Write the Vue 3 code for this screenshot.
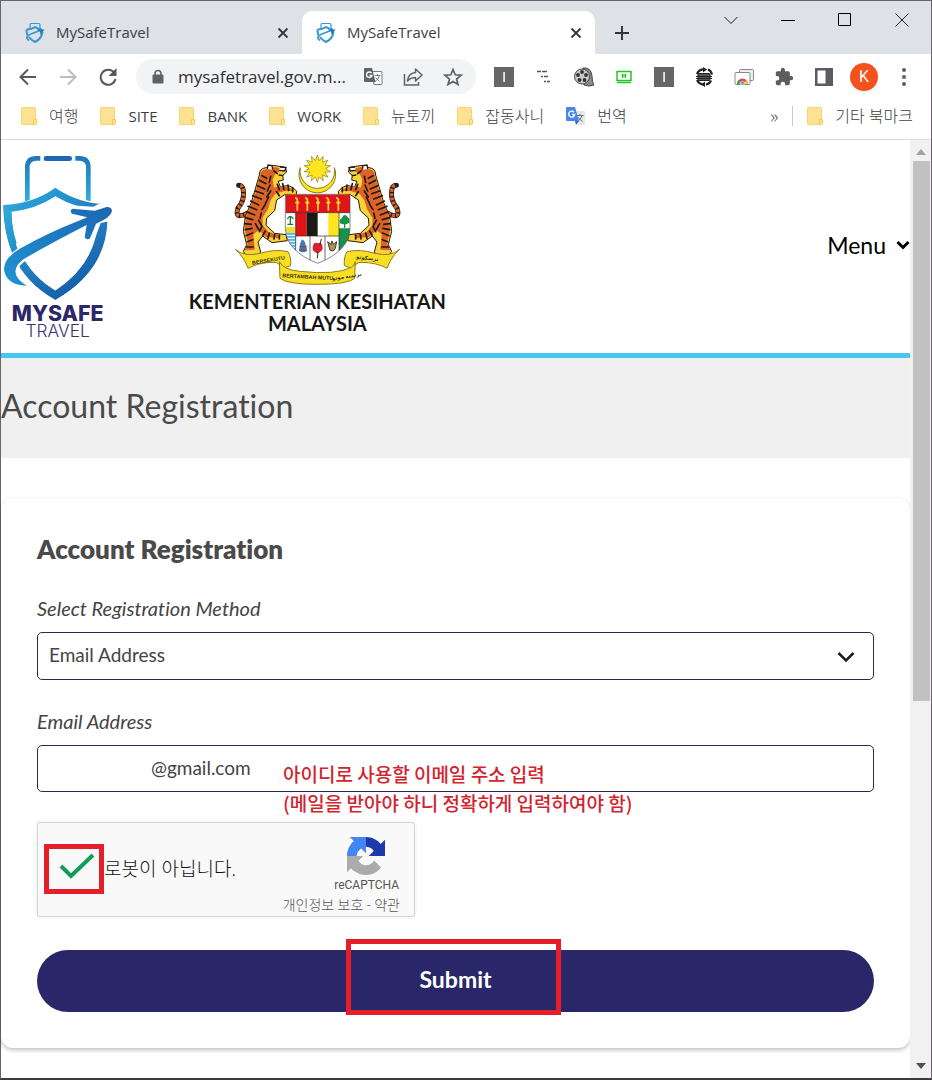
<script setup>
import { ref } from 'vue'

const tabs = ref([
  { id: 1, title: 'MySafeTravel', active: false },
  { id: 2, title: 'MySafeTravel', active: true },
])

const bookmarks = ['여행', 'SITE', 'BANK', 'WORK', '뉴토끼', '잡동사니']
const isLatin = (name) => /^[A-Z]/.test(name)

const method = ref('email')
const email = ref('@gmail.com')
const human = ref(true)

// sun of the crest, 14 rays
const rays = Array.from({ length: 28 }, (_, i) => {
  const r = i % 2 ? 25 : 41
  const a = (Math.PI * i) / 14 - Math.PI / 2
  return `${(412 + r * Math.cos(a)).toFixed(1)},${(71 + r * Math.sin(a)).toFixed(1)}`
}).join(' ')
</script>

<template>
  <div class="window">
    <div class="tabstrip">
      <div v-for="tab in tabs" :key="tab.id" class="tab" :class="{ active: tab.active }">
        <svg class="favicon" viewBox="0 0 20 20" width="20" height="20" fill="none" stroke="#3b97cf">
          <path d="M5 7V2q0-1.500 1.500-1.500h7Q15 .5 15 2v4" stroke-width="1.200" />
          <path d="M1.500 6.500q5 0 8.500-2.500 3 2 7 2.500M1.500 6.500q0 3 1 6M17.500 9q-1 7-7.500 10-4-2-6-5" stroke-width="2" />
          <path d="M4 17.500Q-1 14 6 11l10-4" stroke-width="1.800" />
          <path d="M11.500 6.500l8 0-4 5.500-.5-3.500z" fill="#2079bb" stroke="none" />
        </svg>
        <span class="tab-title">{{ tab.title }}</span>
        <button class="plain tab-close" aria-label="Close tab">
          <svg viewBox="0 0 12 12" width="12" height="12"><path d="M1.500 1.500l9 9M10.500 1.500l-9 9" stroke="#35363a" stroke-width="1.800" /></svg>
        </button>
      </div>
      <button class="plain new-tab" aria-label="New tab">
        <svg viewBox="0 0 16 16" width="16" height="16"><path d="M8 1v14M1 8h14" stroke="#35363a" stroke-width="2" /></svg>
      </button>
      <div class="controls">
        <button class="plain" aria-label="Search tabs">
          <svg viewBox="0 0 14 14" width="14" height="14"><path d="M.5 4l6.500 6.500L13.500 4" fill="none" stroke="#222" /></svg>
        </button>
        <button class="plain" aria-label="Minimize">
          <svg viewBox="0 0 14 14" width="14" height="14"><path d="M0 7.500h14" stroke="#000" /></svg>
        </button>
        <button class="plain" aria-label="Maximize">
          <svg viewBox="0 0 14 14" width="14" height="14"><path d="M.5.5h12v12H.5z" fill="none" stroke="#000" /></svg>
        </button>
        <button class="plain" aria-label="Close">
          <svg viewBox="0 0 14 14" width="14" height="14"><path d="M.5.5l13 13M13.500.5l-13 13" stroke="#222" /></svg>
        </button>
      </div>
    </div>

    <div class="toolbar">
      <button class="plain tool" aria-label="Back">
        <svg viewBox="0 0 18 18" width="18" height="18"><path d="M17 9H2M9 1.500L1.500 9 9 16.500" fill="none" stroke="#55585c" stroke-width="2" /></svg>
      </button>
      <button class="plain tool" aria-label="Forward">
        <svg viewBox="0 0 18 18" width="18" height="18"><path d="M1 9h15M9 1.500L16.500 9 9 16.500" fill="none" stroke="#babcbe" stroke-width="2" /></svg>
      </button>
      <button class="plain tool" aria-label="Reload">
        <svg viewBox="0 0 18 18" width="18" height="18">
          <path d="M15 4.500A7.500 7.500 0 1 0 16.500 11" fill="none" stroke="#55585c" stroke-width="2" />
          <path d="M17.500 0v8h-8z" fill="#55585c" />
        </svg>
      </button>
      <div class="omnibox">
        <svg class="lock" viewBox="0 0 12 16" width="12" height="16">
          <path d="M3 7V4.500a3 3 0 0 1 6 0V7" fill="none" stroke="#5f6368" stroke-width="1.600" />
          <rect x="0.500" y="5.500" width="11" height="9" rx="1.200" fill="#5f6368" />
        </svg>
        <span class="url">mysafetravel.gov.m...</span>
        <button class="plain tool" aria-label="Translate">
          <svg viewBox="0 0 20 20" width="20" height="20">
            <path d="M9 4.500h9q1 0 1 1v11q0 1-1 1h-7z" fill="#fff" stroke="#77797d" />
            <path d="M11.500 8.500h6M14.500 7v1.500M16.500 8.500q-1 4-4.500 6M12.500 10.500q2 2 4 4" fill="none" stroke="#77797d" />
            <path d="M2 1h7l3.500 14H2q-1 0-1-1V2q0-1 1-1z" fill="#5f6368" />
            <path d="M8.500 6A2.800 2.800 0 1 0 9 8.500H6.500" fill="none" stroke="#fff" stroke-width="1.400" />
          </svg>
        </button>
        <button class="plain tool" aria-label="Share">
          <svg viewBox="0 0 20 20" width="20" height="20" fill="none" stroke="#5f6368" stroke-width="1.500">
            <path d="M1.500 7v11h14v-3" />
            <path d="M12.500 2l6.500 6-6.500 6v-3.500q-5 0-8 3.500.5-7.500 8-8.500z" stroke-linejoin="round" />
          </svg>
        </button>
        <button class="plain tool" aria-label="Bookmark this page">
          <svg viewBox="0 0 20 20" width="20" height="20">
            <path d="M10 2.500l2.200 5.300 5.800.5-4.400 3.700 1.400 5.500-5-3-5 3 1.400-5.500L2 8.300l5.800-.5z" fill="none" stroke="#5f6368" stroke-width="1.700" />
          </svg>
        </button>
      </div>
      <div class="extensions">
        <button class="plain tool" aria-label="Extension 1">
          <svg viewBox="0 0 20 20" width="20" height="20"><rect width="20" height="20" fill="#666" /><path d="M9.500 5v10" stroke="#bcd0f0" /><path d="M10.500 5v10" stroke="#f4e2d0" /></svg>
        </button>
        <button class="plain tool" aria-label="Enable right click">
          <svg viewBox="0 0 14 14" width="14" height="14" stroke="#555" stroke-width="1.500" fill="none">
            <path d="M0 1.500h4M5 1.500h5M4 6.500h2M7 6.500h4M7 11.500h2M10 11.500h3" />
          </svg>
        </button>
        <button class="plain tool" aria-label="Video reel">
          <svg viewBox="0 0 20 20" width="20" height="20">
            <path d="M9 1q8-1 9 8 0 6 2 9-5 2-10 0z" fill="#8b8b8b" stroke="#444" />
            <circle cx="8" cy="9.500" r="7.500" fill="#c9c9c9" stroke="#444" />
            <g fill="#333"><circle cx="8" cy="5" r="1.900" /><circle cx="4" cy="8" r="1.900" /><circle cx="5.500" cy="13" r="1.900" /><circle cx="10.500" cy="13" r="1.900" /><circle cx="12" cy="8" r="1.900" /></g>
          </svg>
        </button>
        <button class="plain tool" aria-label="Screen">
          <svg viewBox="0 0 16 14" width="16" height="14" fill="none" stroke="#25c525">
            <path d="M1 1.500h14v9H1z" stroke-width="1.500" /><path d="M1 12.500h14" stroke-width="1.500" /><path d="M6.500 4v4M9.500 4v4M6 5.500h4" stroke-width="1.500" />
          </svg>
        </button>
        <button class="plain tool" aria-label="Extension 2">
          <svg viewBox="0 0 20 20" width="20" height="20"><rect width="20" height="20" fill="#666" /><path d="M9.500 5v10" stroke="#bcd0f0" /><path d="M10.500 5v10" stroke="#f4e2d0" /></svg>
        </button>
        <button class="plain tool" aria-label="Rotate screen">
          <svg viewBox="0 0 20 20" width="20" height="20" fill="none" stroke="#222">
            <path d="M3 7q2-5 8-4.500M14 2.500q3 1 4 5M3 13q2 4 6 4.500M12 17.500q4-.5 5-4" stroke-width="2.200" />
            <path d="M9 0l4 2.500-4 3zM11 20l-4-2.500 4-3z" fill="#222" stroke="none" />
            <rect x="4" y="6.500" width="12" height="7" rx="1" fill="#555" />
            <path d="M2 9.500h16M2 11.500h16" stroke-width="1" />
          </svg>
        </button>
        <button class="plain tool" aria-label="Web store">
          <svg viewBox="0 0 20 20" width="20" height="20">
            <rect x="5.500" y="2.500" width="14" height="11" rx="1" fill="#eee" stroke="#888" />
            <rect x="1" y="5.500" width="15" height="12" rx="1" fill="#fff" stroke="#888" />
            <path d="M3 17a5.500 5.500 0 0 1 11 0z" fill="#df493b" />
            <path d="M3 17q0-3 1.500-4l2.500 4z" fill="#3aa757" /><path d="M10 17l2-4q2 1.500 2 4z" fill="#f8c62d" />
            <path d="M6 17a2.500 2.500 0 0 1 5 0z" fill="#3f78d8" stroke="#fff" stroke-width=".7" />
          </svg>
        </button>
        <button class="plain tool" aria-label="Extensions">
          <svg viewBox="1 0 23 23" width="19" height="19"><path fill="#5a5d62" d="M20.500 11H19V7c0-1.100-.9-2-2-2h-4V3.500a2.500 2.500 0 0 0-5 0V5H4c-1.100 0-2 .9-2 2v3.800h1.500a2.700 2.700 0 0 1 0 5.400H2V20c0 1.100.9 2 2 2h3.800v-1.500a2.700 2.700 0 0 1 5.400 0V22H17c1.100 0 2-.9 2-2v-4h1.500a2.500 2.500 0 0 0 0-5z" /></svg>
        </button>
        <button class="plain tool" aria-label="Side panel">
          <svg viewBox="0 0 18 18" width="18" height="18"><path d="M0 0h18v18H0z" fill="#5a5d62" /><path d="M2.500 2.500h8v13h-8z" fill="#fff" /></svg>
        </button>
        <button class="plain tool" aria-label="Profile"><span class="avatar">K</span></button>
        <button class="plain tool" aria-label="Browser menu">
          <svg viewBox="0 0 4 18" width="4" height="18" fill="#5a5d62"><circle cx="2" cy="2" r="2" /><circle cx="2" cy="9" r="2" /><circle cx="2" cy="16" r="2" /></svg>
        </button>
      </div>
    </div>

    <nav class="bookmarks">
      <a v-for="name in bookmarks" :key="name" href="#" :class="{ latin: isLatin(name) }">
        <svg viewBox="0 0 16 18" width="16" height="18"><rect x=".5" y=".5" width="14" height="17" rx="1" fill="#fde293" stroke="#f6d56b" /><path d="M12.500 17.500v-5h3v3.500q0 1.500-1.500 1.500z" fill="#fde79c" stroke="#f3c94f" /></svg>
        {{ name }}
      </a>
      <a href="#">
        <svg viewBox="0 0 19 19" width="19" height="19">
          <path d="M8 4h10q1 0 1 1v12q0 1-1 1h-6z" fill="#e3e5e8" />
          <path d="M11 8.500h6.500M14 7v1.500M16 8.500q-1 4-4.500 6M12 10.500q2 2 4.500 4" fill="none" stroke="#687078" />
          <path d="M1 0h8l4 14H1q-1 0-1-1V1q0-1 1-1z" fill="#4a85ec" /><path d="M9 14h4l-3 4z" fill="#2b5fc0" />
          <path d="M8 5.200A3 3 0 1 0 8.700 7.500H6" fill="none" stroke="#fff" stroke-width="1.400" />
        </svg>
        번역
      </a>
      <button class="plain more" aria-label="More bookmarks">»</button>
      <a href="#" class="others">
        <svg viewBox="0 0 16 18" width="16" height="18"><rect x=".5" y=".5" width="14" height="17" rx="1" fill="#fde293" stroke="#f6d56b" /><path d="M12.500 17.500v-5h3v3.500q0 1.500-1.500 1.500z" fill="#fde79c" stroke="#f3c94f" /></svg>
        기타 북마크
      </a>
    </nav>

    <div class="viewport">
      <main class="page">
        <header class="site-header">
          <svg class="brand" viewBox="3 0 339 639" width="113" height="213" role="img" aria-label="MySafe Travel">
            <defs>
              <linearGradient id="shield" x1="0" y1="0" x2=".7" y2="1"><stop offset="0" stop-color="#2eaede" /><stop offset="1" stop-color="#1558a8" /></linearGradient>
              <linearGradient id="handle" x1="0" y1="0" x2="0" y2="1"><stop offset="0" stop-color="#2275bb" /><stop offset="1" stop-color="#2eade0" /></linearGradient>
              <linearGradient id="plane" x1="0" y1="1" x2="1" y2="0"><stop offset="0" stop-color="#1f93d2" /><stop offset="1" stop-color="#1b67b2" /></linearGradient>
            </defs>
            <path d="M75 184V82q0-34 34-34h12v14h-12q-20 0-20 20v98zM272 184V82q0-34-34-34h-12v14h12q20 0 20 20v98z" fill="url(#handle)" />
            <rect x="131" y="48" width="85" height="15" rx="7" fill="#2069b2" />
            <path fill-rule="evenodd" d="M10 195q90-4 156-52 66 46 154 50l2 52q-6 150-156 234Q12 395 10 195zM34 215q4 158 132 237 122-78 130-210l2-32q-70-4-132-41-60 40-132 46z" fill="url(#shield)" />
            <path d="M5 350L60 300 230 226 250 222 205 224Q196 204 212 196L280 200 300 190H345V236L306 252 276 312Q258 322 248 304L252 268 90 355 60 380 60 425 10 400z" fill="#fff" />
            <path d="M34 215q2 62 18 111l-16 12Q10 270 10 195zM321 245q-8 150-155 234-68-38-108-100l16-15q34 58 92 88 98-64 122-164l14-39z" fill="url(#shield)" />
            <path d="M80 437Q18 436 12 388q0-35 50-63 80-46 180-85l20-8-46-11q-9-10 2-15l66 6 36-11q14-1 16 11-2 14-24 27l-24 12-18 44q-10 7-16-3l6-37Q150 311 70 358q-52 40 10 79z" fill="url(#plane)" />
            <text x="173" y="543" text-anchor="middle" class="logo-bold">MYSAFE</text>
            <text x="173" y="590" text-anchor="middle" class="logo-light">TRAVEL</text>
          </svg>

          <svg class="crest" viewBox="0 -15 840 639" width="280" height="213" role="img" aria-label="Kementerian Kesihatan Malaysia">
            <defs>
              <clipPath id="arms"><path d="M316 148H510V250Q508 318 413 355 318 318 316 250z" /></clipPath>
              <g id="tiger">
                <path d="M202 205q-40 20-28-16 20-22 16-52-2-16-14-16" fill="none" stroke="#1d1a18" stroke-width="15" stroke-linecap="round" />
                <path d="M202 205q-40 20-28-16 20-22 16-52-2-16-14-16" fill="none" stroke="#d9632a" stroke-width="11" stroke-dasharray="9 4" />
                <path d="M238 90q0-20 20-22 12-10 34-5l24 4 4 14-12 10 2 14-16 4 8 18q28-14 48 12l-2 16-34-6-24 16-6 32-24 22-2 22 26 24 34 4 4 18-46 6-28-20-14 18 8 30-12 14-32-4-8-12 10-20-10-40 6-46 18-40z" fill="#f7d336" stroke="#2b1a12" stroke-width="3" stroke-linejoin="round" />
                <path d="M240 92q0-18 20-20 14-10 34-4l14 6-22 12-8 18 4 24q30-12 62 10l-30 0-28 8-14 20-8 26-16 26 0 22 18 22 36 8-6 10-38-4-22-20-16 12 4 46-30 2 10-22-10-40 6-46 20-44z" fill="#dc6227" />
                <path d="M262 72l2-12 12 2 2 12M300 66l18 2-4 10-16-2M296 90l14 2" fill="#fff" stroke="#1d1a18" stroke-width="4" />
                <g fill="none" stroke="#1d1a18" stroke-width="5" stroke-linecap="round">
                  <path d="M246 92l14 8M238 106l20 10M232 122l22 10M226 138l24 8M218 152l26 10M212 168l24 12M204 184l26 10M200 200l24 10M196 218l22 6M194 236l20 2M196 254l20-4M198 272l20-8M202 290l16-6M200 306l20 0" />
                  <path d="M272 94l-4 18M270 120l-8 18M272 138l-12 18M266 156l-10 20M256 178l-10 16M244 204l-4 16M236 226l8 14M226 236l10 18M246 244l-8 16M256 258l-8 14M268 264l-4 16M284 268l-2 14M298 270l0 12" />
                  <path d="M292 118l6 16M308 116l4 18M324 120l2 16M338 128l0 12M290 140l8 12M282 78l10 8" />
                </g>
              </g>
            </defs>
            <path d="M361 68A55 55 0 1 0 463 68 52 52 0 1 1 361 68z" fill="#ffe51f" stroke="#8a7b1c" stroke-width="3" />
            <polygon :points="rays" fill="#ffe51f" stroke="#8a7b1c" stroke-width="2" />
            <use href="#tiger" /><use href="#tiger" transform="translate(825 0) scale(-1 1)" />
            <g clip-path="url(#arms)">
              <path d="M316 148h194v210H316z" fill="#fff" />
              <path d="M316 148h194v55H316z" fill="#e0141b" />
              <path d="M347 203h33v70h-33z" fill="#e0141b" /><path d="M380 203h33v70h-33z" fill="#1c1916" /><path d="M445 203h32v70h-32z" fill="#ffe51f" />
              <path d="M477 250h33v90h-33z" fill="#14924b" /><path d="M316 246h31v17h-31z" fill="#f5df24" /><path d="M316 263h31v75h-31z" fill="#57b6e6" />
              <path d="M318 271h28M318 280h28M318 289h28M318 298h28M318 307h28" stroke="#fff" stroke-width="3" />
              <path d="M331 216v22M322 222q9-16 18 0M322 238h18M494 224v24" stroke="#167b45" stroke-width="4" fill="none" />
              <path d="M480 235q-3-12 5-15 8-18 18-4 9 6 4 18-14 8-27 1z" fill="#159447" />
              <path d="M316 203h194M347 203v135M477 203v135M347 273h130M390 273v80M435 273v80" stroke="#28241e" stroke-width="2" fill="none" />
              <path d="M360 303q0-14 8-20 8 6 10 20l4 14q-14 10-26 0z" fill="#397dbb" /><path d="M358 305h22M362 315h16" stroke="#b52b35" stroke-width="3" />
              <path d="M399 302q2-12 13-7 12-5 15 8 4 14-8 18-8 8-14-1-10-2-6-18z" fill="#d9202b" /><path d="M414 320l-2 20M420 300l4-18" stroke="#382b23" stroke-width="3" />
              <path d="M443 290l10 8 3-10 4 10 10-8-4 20-6 8-10-2z" fill="#aa9650" stroke="#423b30" stroke-width="3" />
              <path d="M346 157l6 6v34M376 157l6 6v34M408 157l6 6v34M439 157l6 6v34M469 157l6 6v34M346 173h12M376 173h12M408 173h12M439 173h12M469 173h12" stroke="#fbdc27" stroke-width="5" fill="none" />
            </g>
            <path d="M316 148H510V250Q508 318 413 355 318 318 316 250z" fill="none" stroke="#544d45" stroke-width="2" />
            <g fill="#f8df25" stroke="#8e7d1a" stroke-width="3" stroke-linejoin="round">
              <path d="M166 313q28 24 74 12 46-14 84-5 10 14 8 42l-28 10q-4-20-22-20-46 0-78 18-12-34-38-57z" />
              <path d="M659 313q-28 24-74 12-46-14-84-5-10 14-8 42l28 10q4-20 22-20 46 0 78 18 12-34 38-57z" />
              <path d="M298 350q12 24 60 29 110 12 156-12 10-6 12-17l-2 50q-20 18-112 18-90 0-112-18z" />
            </g>
            <text class="motto" x="217" y="359" transform="rotate(-9 217 359)">BERSEKUTU</text>
            <text class="motto" x="307" y="397" transform="rotate(3 307 397)">BERTAMBAH MUTU</text>
            <text class="motto" x="528" y="340" transform="rotate(7 528 340)">برسکوتو</text>
            <text class="motto" x="457" y="406" transform="rotate(-9 457 406)">برتمبه موتو</text>
            <text class="ministry" x="412" y="492" text-anchor="middle">KEMENTERIAN KESIHATAN</text>
            <text class="ministry" x="412" y="559" text-anchor="middle">MALAYSIA</text>
          </svg>

          <button class="plain menu">
            Menu
            <svg viewBox="0 0 14 10" width="14" height="10"><path d="M1.500 2L7 7.500 12.500 2" fill="none" stroke="#000" stroke-width="3" /></svg>
          </button>
        </header>

        <div class="banner"><h1>Account Registration</h1></div>

        <form class="card" @submit.prevent>
          <h2>Account Registration</h2>

          <label for="method">Select Registration Method</label>
          <div class="field">
            <select id="method" v-model="method">
              <option value="email">Email Address</option>
            </select>
            <svg class="chevron" viewBox="0 0 18 12" width="18" height="12"><path d="M1.500 2L9 9.500 16.500 2" fill="none" stroke="#1c1c1c" stroke-width="2.500" /></svg>
          </div>

          <label for="email">Email Address</label>
          <div class="field">
            <input id="email" v-model="email" type="text">
            <p class="note">아이디로 사용할 이메일 주소 입력<br>(메일을 받아야 하니 정확하게 입력하여야 함)</p>
          </div>

          <div class="captcha">
            <span class="check">
              <input id="human" v-model="human" type="checkbox">
              <svg v-if="human" viewBox="0 0 36 26" width="36" height="26"><path d="M2 13l10 10L34 2" fill="none" stroke="#0f9d58" stroke-width="4" /></svg>
            </span>
            <label for="human">로봇이 아닙니다.</label>
            <div class="captcha-brand">
              <svg viewBox="0 0 64 64" width="38" height="38">
                <path fill="#1c3aa9" d="M64 31.955l-.033-1.370V4.687l-7.160 7.160C50.948 4.674 42.033.093 32.050.093c-10.400 0-19.622 4.960-25.458 12.640l11.736 11.860a15.550 15.550 0 0 1 4.754-5.334c2.050-1.600 4.952-2.906 8.968-2.906.485 0 .86.057 1.135.163 4.976.393 9.288 3.140 11.828 7.124l-8.307 8.307z" />
                <path fill="#4285f4" d="M31.862.094l-1.370.033H4.594l7.160 7.160C4.580 13.147 0 22.060 0 32.046c0 10.400 4.960 19.622 12.640 25.458L24.500 45.768a15.550 15.550 0 0 1-5.334-4.754c-1.600-2.050-2.906-4.952-2.906-8.968 0-.485.057-.86.163-1.135.393-4.976 3.140-9.288 7.124-11.828l8.307 8.307z" />
                <path fill="#ababab" d="M.001 32.045l.033 1.370v25.898l7.160-7.160c5.860 7.173 14.774 11.754 24.760 11.754 10.400 0 19.622-4.960 25.458-12.640l-11.736-11.860a15.550 15.550 0 0 1-4.754 5.334c-2.050 1.600-4.952 2.906-8.968 2.906-.485 0-.86-.057-1.135-.163-4.976-.393-9.288-3.140-11.828-7.124l8.307-8.307z" />
              </svg>
              <span class="name">reCAPTCHA</span>
              <span class="terms"><a href="#">개인정보 보호</a> - <a href="#">약관</a></span>
            </div>
          </div>

          <div class="submit-row">
            <button type="submit" class="submit">Submit</button>
            <span class="highlight"></span>
          </div>
        </form>
      </main>

      <div class="scrollbar">
        <svg viewBox="0 0 10 6" width="10" height="6"><path d="M0 6l5-6 5 6z" fill="#a3a3a3" /></svg>
        <div class="thumb"></div>
        <svg class="down" viewBox="0 0 10 6" width="10" height="6"><path d="M0 0l5 6 5-6z" fill="#505050" /></svg>
      </div>
    </div>
  </div>
</template>

<style>
body {
  margin: 0;
}
</style>

<style scoped>
* {
  box-sizing: border-box;
}
.window {
  display: flex;
  flex-direction: column;
  min-height: 100vh;
  border: 1px solid #67656b;
  border-bottom: 2px solid #3c3b3d;
  background: #fff;
  font-family: "Open Sans", "Noto Sans CJK KR", sans-serif;
  color: #3c4043;
}
.plain {
  display: flex;
  align-items: center;
  justify-content: center;
  padding: 0;
  border: 0;
  background: none;
  font: inherit;
  color: inherit;
}
a {
  color: inherit;
  text-decoration: none;
}

/* browser frame */
.tabstrip {
  display: flex;
  align-items: flex-end;
  height: 53px;
  background: #dee1e6;
}
.tab {
  display: flex;
  align-items: center;
  flex: 0 1 301px;
  height: 43px;
  padding: 0 12px 0 24px;
  font-size: 15px;
}
.tab.active {
  flex-basis: 293px;
  padding-left: 14px;
  border-radius: 10px 10px 0 0;
  background: #fff;
}
.tab-title {
  flex: 1;
  margin-left: 11px;
  padding-bottom: 2px;
}
.tab-close {
  width: 14px;
  height: 14px;
}
.new-tab {
  width: 54px;
  height: 43px;
}
.controls {
  display: flex;
  align-self: flex-start;
  margin: 0 1px 0 auto;
}
.controls button {
  width: 57px;
  height: 38px;
}
.toolbar {
  display: flex;
  align-items: center;
  height: 45px;
  padding: 0 7px;
}
.tool {
  width: 40px;
  height: 36px;
}
.omnibox {
  display: flex;
  align-items: center;
  flex: 1;
  height: 35px;
  margin: 0 8px;
  padding: 0 3px 0 16px;
  border-radius: 18px;
  background: #f1f3f4;
}
.url {
  flex: 1;
  margin-left: 14px;
  color: #303134;
  font-size: 17px;
  white-space: nowrap;
}
.extensions {
  display: flex;
}
.avatar {
  width: 28px;
  border-radius: 50%;
  background: #f4511e;
  color: #fff;
  font-family: Roboto, sans-serif;
  font-size: 16px;
  line-height: 28px;
  text-align: center;
}
.bookmarks {
  display: flex;
  align-items: center;
  gap: 22px;
  height: 41px;
  padding: 0 18px 6px 20px;
  border-bottom: 1px solid #dadce0;
  font-size: 16px;
  font-weight: 300;
  line-height: 20px;
  white-space: nowrap;
}
.bookmarks a {
  display: flex;
  align-items: center;
  gap: 12px;
}
.bookmarks .latin {
  font-size: 15px;
  font-weight: 400;
}
.more {
  margin-left: auto;
  font-size: 18px;
}
.bookmarks .others {
  margin-left: -8px;
  padding-left: 14px;
  border-left: 1px solid #c6c9cd;
}

/* web page */
.viewport {
  display: flex;
  flex: 1;
}
.page {
  flex: 1;
  min-width: 0;
  padding-bottom: 30px;
  font-family: Lato, "Noto Sans CJK KR", sans-serif;
  font-variant-ligatures: none;
}
.site-header {
  display: flex;
  align-items: center;
  border-bottom: 5px solid #49c6ef;
}
.crest {
  margin-left: 66px;
}
.logo-bold {
  fill: #2b2768;
  font: 800 64px Inter, sans-serif;
}
.logo-light {
  fill: #39346f;
  font: 300 52px Inter, sans-serif;
}
.motto {
  fill: #3a300b;
  font: 700 16px "Liberation Sans", "DejaVu Sans", sans-serif;
}
.ministry {
  fill: #161616;
  font: 700 60px Lato, sans-serif;
}
.menu {
  gap: 10px;
  margin-left: auto;
  padding-bottom: 3px;
  color: #000;
  font-size: 23px;
}
.banner {
  display: flex;
  align-items: center;
  height: 100px;
  background: #f0f0f0;
}
h1 {
  margin: 0 0 6px;
  color: #4a4a4a;
  font-size: 32px;
  font-weight: 400;
}
.card {
  margin-top: 40px;
  padding: 36px;
  border-radius: 12px;
  box-shadow: 0 2px 4px rgba(0, 0, 0, 0.25);
  color: #444;
}
h2 {
  margin: 0 0 30px;
  color: #4a4a4a;
  font-size: 26px;
  font-weight: 800;
  line-height: 30px;
}
.card > label {
  display: block;
  margin-bottom: 10px;
  font-size: 20px;
  font-style: italic;
  line-height: 28px;
}
.field {
  position: relative;
  margin-bottom: 27px;
}
.field select,
.field input {
  display: block;
  width: 100%;
  height: 48px;
  padding: 0 11px 3px;
  border: 1px solid #2b2855;
  border-radius: 5px;
  background: #fff;
  color: #444;
  font: inherit;
  font-size: 19px;
  appearance: none;
}
.field input {
  height: 47px;
  padding-left: 113px;
}
.chevron {
  position: absolute;
  top: 19px;
  right: 19px;
}
.note {
  position: absolute;
  top: 14px;
  left: 246px;
  margin: 0;
  color: #d2232f;
  font-family: "Noto Sans CJK KR", sans-serif;
  font-size: 19px;
  font-weight: 500;
  line-height: 29px;
  white-space: nowrap;
}
.captcha {
  display: flex;
  align-items: center;
  width: 378px;
  height: 95px;
  margin-top: 30px;
  padding: 0 14px 2px 6px;
  border: 1px solid #d3d3d3;
  border-radius: 3px;
  background: #f9f9f9;
  box-shadow: 0 0 4px rgba(0, 0, 0, 0.08);
}
.check {
  position: relative;
  width: 60px;
  height: 50px;
  border: 5px solid #e41f29;
}
.check input {
  width: 100%;
  height: 100%;
  margin: 0;
  appearance: none;
}
.check svg {
  position: absolute;
  top: 4px;
  left: 10px;
  pointer-events: none;
}
.captcha label {
  padding-bottom: 3px;
  color: #111;
  font-size: 19px;
  font-weight: 300;
}
.captcha-brand {
  display: flex;
  flex-direction: column;
  align-items: flex-end;
  margin-left: auto;
  padding-top: 14px;
  color: #555;
  font-family: Roboto, "Noto Sans CJK KR", sans-serif;
  font-size: 14px;
  line-height: 20px;
}
.captcha-brand svg {
  margin-right: 15px;
}
.captcha-brand .name {
  margin-right: 1px;
  font-size: 12px;
}
.terms {
  font-weight: 300;
}
.submit-row {
  position: relative;
  margin-top: 33px;
}
.submit {
  display: block;
  width: 100%;
  height: 62px;
  padding: 0 0 4px;
  border: 0;
  border-radius: 31px;
  background: #29276a;
  color: #fff;
  font: 700 23px Lato, sans-serif;
}
.highlight {
  position: absolute;
  top: -11px;
  left: calc(50% - 110px);
  width: 215px;
  height: 76px;
  border: 5px solid #e41f29;
  pointer-events: none;
}
.scrollbar {
  display: flex;
  flex-direction: column;
  align-items: center;
  width: 21px;
  padding: 9px 1px 9px 2px;
  background: #f1f1f1;
}
.thumb {
  width: 17px;
  height: 540px;
  margin-top: 6px;
  background: #c1c1c1;
}
.down {
  margin-top: auto;
}
</style>
